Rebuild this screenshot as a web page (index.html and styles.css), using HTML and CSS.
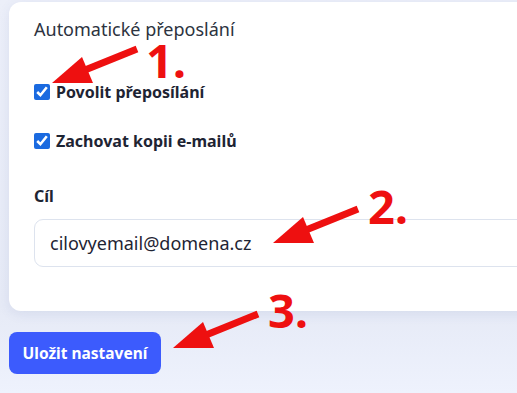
FILE: index.html
```html
<!DOCTYPE html>
<html lang="cs">
<head>
<meta charset="utf-8">
<title>Automatické přeposlání</title>
<link rel="stylesheet" href="styles.css">
</head>
<body>
<div class="page">
  <section class="card">
    <h2 class="title">Automatické přeposlání</h2>
    <label class="check check-first"><input type="checkbox" checked><span>Povolit přeposílání</span></label>
    <label class="check check-second"><input type="checkbox" checked><span>Zachovat kopii e-mailů</span></label>
    <label class="field-label" for="target">Cíl</label>
    <input class="field" id="target" type="text" value="cilovyemail@domena.cz">
  </section>
  <button class="save" type="button">Uložit nastavení</button>

  <svg class="arrow arrow-1" width="92" height="42" viewBox="0 0 92 42"><line x1="88" y1="4" x2="36" y2="25" stroke="#ee1010" stroke-width="7"/><polygon points="3,38 33,12 44,38" fill="#ee1010"/></svg>
  <span class="num num-1">1.</span>
  <svg class="arrow arrow-2" width="92" height="42" viewBox="0 0 92 42"><line x1="88" y1="4" x2="36" y2="25" stroke="#ee1010" stroke-width="7"/><polygon points="3,38 33,12 44,38" fill="#ee1010"/></svg>
  <span class="num num-2">2.</span>
  <svg class="arrow arrow-3" width="92" height="42" viewBox="0 0 92 42"><line x1="88" y1="4" x2="36" y2="25" stroke="#ee1010" stroke-width="7"/><polygon points="3,38 33,12 44,38" fill="#ee1010"/></svg>
  <span class="num num-3">3.</span>
</div>
</body>
</html>
```
FILE: styles.css
```css
* { box-sizing: border-box; }
html, body {
  margin: 0;
  height: 100%;
  overflow: hidden;
}
body {
  background: linear-gradient(180deg, #eceff9 0%, #e6eaf6 78%, #eef2fd 100%);
  font-family: "Noto Sans", "Open Sans", sans-serif;
  color: #1e2433;
}
.page {
  position: relative;
  width: 517px;
  height: 393px;
  overflow: hidden;
  padding: 2px 0 0 9px;
  display: flex;
  flex-direction: column;
  align-items: flex-start;
}
.card {
  width: 640px;
  flex-shrink: 0;
  background: #fff;
  border-radius: 12px;
  box-shadow: 0 3px 12px rgba(70, 90, 160, 0.10);
  padding: 14px 25px 44px;
  display: flex;
  flex-direction: column;
  align-items: flex-start;
}
.title {
  margin: 0;
  font-size: 18px;
  line-height: 26px;
  font-weight: 400;
  color: #2c3340;
}
.check {
  display: flex;
  align-items: center;
  gap: 6px;
  height: 22px;
  font-size: 16px;
  font-weight: 700;
  color: #1e2433;
}
.check input {
  margin: 0;
  width: 16px;
  height: 16px;
  accent-color: #1a6ae0;
}
.check-first { margin-top: 39px; }
.check-second { margin-top: 27px; }
.field-label {
  margin-top: 33px;
  font-size: 16px;
  line-height: 22px;
  font-weight: 700;
  color: #1e2433;
}
.field {
  margin-top: 12px;
  width: 600px;
  height: 48px;
  border: 1px solid #dde3ee;
  border-radius: 9px;
  padding: 0 15px;
  font-family: "Noto Sans", "Open Sans", sans-serif;
  font-size: 18px;
  color: #1e2433;
  background: #fff;
}
.save {
  margin-top: 21px;
  width: 152px;
  height: 42px;
  border: none;
  border-radius: 8px;
  background: #3c5bfd;
  color: #fff;
  font-family: "Noto Sans", "Open Sans", sans-serif;
  font-size: 15.5px;
  font-weight: 700;
  padding: 0;
}
.arrow { position: absolute; }
.arrow-1 { left: 49px; top: 45px; }
.arrow-2 { left: 270px; top: 205px; }
.arrow-3 { left: 170px; top: 310px; }
.num {
  position: absolute;
  font-family: "Open Sans", sans-serif;
  font-weight: 700;
  font-size: 47px;
  line-height: 36px;
  color: #ee1010;
}
.num-1 { left: 146px; top: 42px; }
.num-2 { left: 368px; top: 188px; }
.num-3 { left: 268px; top: 292px; }
```
